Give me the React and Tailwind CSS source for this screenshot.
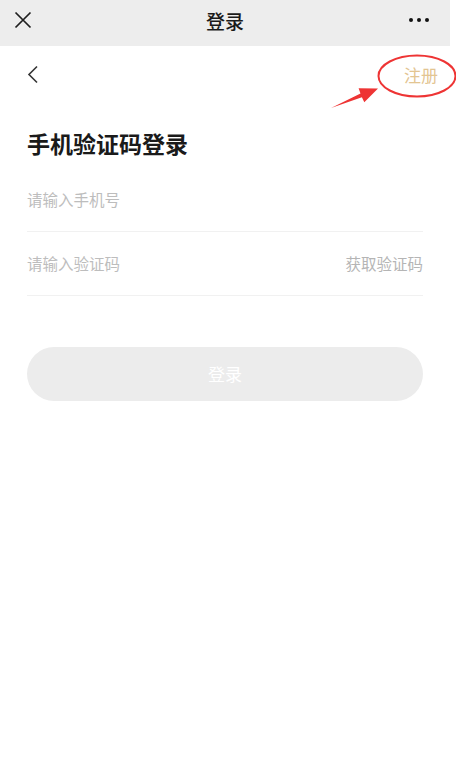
import React from "react";

export default function App() {
  return (
    <div
      className="relative w-[456px] h-[762px] bg-white overflow-hidden"
      style={{ fontFamily: '"Noto Sans CJK SC", "Noto Sans", sans-serif' }}
    >
      <div className="w-[450px]">
        {/* top bar */}
        <div className="h-[46px] bg-[#ededed] grid grid-cols-[1fr_auto_1fr] items-center px-[14px] pb-[6px]">
          <svg width="18" height="18" viewBox="0 0 18 18" className="block">
            <path d="M1.5 1.5 L16.5 16.5 M16.5 1.5 L1.5 16.5" stroke="#1f1f1f" strokeWidth="1.7" fill="none" />
          </svg>
          <div className="text-[19px] leading-none font-medium text-[#1a1a1a]">登录</div>
          <div className="flex items-center justify-end gap-[3.5px] mr-[7px]">
            <span className="w-[4.5px] h-[4.5px] rounded-full bg-[#111]" />
            <span className="w-[4.5px] h-[4.5px] rounded-full bg-[#111]" />
            <span className="w-[4.5px] h-[4.5px] rounded-full bg-[#111]" />
          </div>
        </div>

        {/* nav row */}
        <div className="h-[57px] flex items-center justify-between pl-[27px] pr-[12px]">
          <svg width="12" height="19" viewBox="0 0 12 19" className="block">
            <path d="M10 1.5 L2 9.5 L10 17.5" stroke="#333" strokeWidth="1.6" fill="none" />
          </svg>
          <div className="text-[17px] leading-none text-[#e3c592]">注册</div>
        </div>

        <div className="px-[27px]">
          <div className="mt-[25px] h-[30px] flex items-center text-[23px] font-bold text-[#1a1a1a] leading-none">
            手机验证码登录
          </div>

          <div className="mt-[10px] h-[64px] flex items-center border-b border-[#f1f1f1] text-[15.5px] text-[#bdbdbd]">
            请输入手机号
          </div>
          <div className="h-[64px] flex items-center justify-between border-b border-[#f1f1f1] text-[15.5px] text-[#bdbdbd]">
            <span>请输入验证码</span>
            <span className="text-[#b5b5b5]">获取验证码</span>
          </div>

          <div className="mt-[51px] h-[54px] rounded-full bg-[#ececec] flex items-center justify-center text-[17px] text-white">
            登录
          </div>
        </div>
      </div>

      {/* annotation overlay */}
      <svg
        className="absolute left-0 top-0 pointer-events-none"
        width="456"
        height="120"
        viewBox="0 0 456 120"
      >
        <ellipse cx="417" cy="76" rx="38.5" ry="20.5" fill="none" stroke="#ee3434" strokeWidth="2" />
        <polygon
          points="331,108 360.5,93.4 358.6,88.3 378,88.5 364.3,102.3 361.9,97.2"
          fill="#ee3434"
        />
      </svg>
    </div>
  );
}
